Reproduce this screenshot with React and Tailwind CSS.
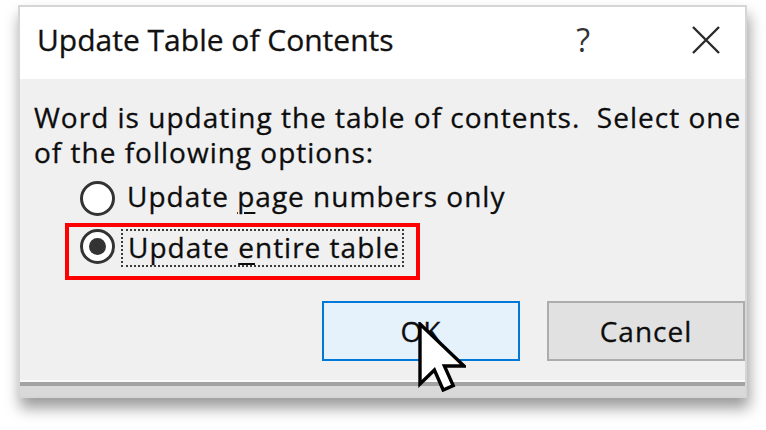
import React from 'react'

const font = { fontFamily: '"Open Sans", "Noto Sans", sans-serif' }

const Radio = ({ checked }) => (
    <div className="w-[35px] h-[35px] shrink-0 rounded-full border-[3px] border-[#333] bg-white flex items-center justify-center">
        {checked ? <div className="w-[17px] h-[17px] rounded-full bg-[#333]" /> : null}
    </div>
)

const Cursor = () => (
    <svg width="48" height="70" viewBox="0 0 12 17.5" className="absolute left-[418px] top-[322px]">
        <path d="M0.5 0.5 L0.5 15.5 L4.1 12 L6.3 17 L8.8 15.9 L6.6 11 L11.5 11 Z"
            fill="white" stroke="black" strokeWidth="0.85" strokeLinejoin="miter" />
    </svg>
)

const App = () => {
  return (
    <div className="relative w-[766px] h-[430px] bg-white overflow-hidden pt-[5px] pl-[18px]" style={font}>
        {/* dialog window */}
        <div className="w-[729px] border-2 border-[#d6d6d6] bg-[#f0f0f0] overflow-hidden flex flex-col shadow-[2px_10px_14px_rgba(0,0,0,0.4)]">
            {/* title bar */}
            <div className="h-[72px] bg-white flex items-center pl-[17px] text-[#111]">
                <span className="text-[30px] leading-none -mt-[6px] [-webkit-text-stroke:0.3px_#111]">Update Table of Contents</span>
                <span className="ml-auto text-[32px] leading-none text-[#333] -mt-[6px]">?</span>
                <svg width="30" height="30" viewBox="0 0 30 30" className="ml-[101px] mr-[24px] -mt-[6px]">
                    <path d="M2 2 L28 28 M28 2 L2 28" stroke="#2b2b2b" strokeWidth="2.4" />
                </svg>
            </div>

            {/* body */}
            <div className="pt-[21px] pl-[14px] text-[28px] leading-[35px] tracking-[1px] text-[#0d0d0d] [-webkit-text-stroke:0.3px_#0d0d0d]">
                <p className="whitespace-nowrap">Word is updating the table of contents.&nbsp; Select one</p>
                <p>of the following options:</p>

                <div className="h-[50px] flex items-center pl-[46px] mt-[3px]">
                    <Radio checked={false} />
                    <span className="ml-[12px] mt-[-4px] whitespace-nowrap">Update <span className="underline underline-offset-[5px] decoration-2">p</span>age numbers only</span>
                </div>

                <div className="flex items-start w-[355px] h-[57px] ml-[31px] border-4 border-[#ff0000]">
                    <div className="ml-[11px] mt-[2px]"><Radio checked /></div>
                    <div className="ml-[6px] mt-[2px] h-[38px] border-2 border-dotted border-[#3a3a3a] pl-[5px] pr-[2px] flex items-center whitespace-nowrap">
                        <span className="-mt-[2px]">Update <span className="underline underline-offset-[5px] decoration-2">e</span>ntire table</span>
                    </div>
                </div>

                {/* buttons */}
                <div className="flex gap-[27px] pl-[288px] pt-[21px] pb-[19px]">
                    <button className="w-[198px] h-[60px] shrink-0 border-2 border-[#0078d7] bg-[#e5f1fb] text-[28px] leading-none tracking-[1px] text-[#0d0d0d]">OK</button>
                    <button className="w-[198px] h-[60px] shrink-0 border-2 border-[#adadad] bg-[#e1e1e1] text-[28px] leading-none tracking-[1px] text-[#0d0d0d]">Cancel</button>
                </div>
            </div>

            {/* bottom edge */}
            <div className="h-[2px] bg-[#fafafa]" />
            <div className="h-[4px] bg-[#a3a3a3]" />
            <div className="h-[10px] bg-[#d9d9d9]" />
        </div>
        <Cursor />
    </div>
  )
}

export default App
